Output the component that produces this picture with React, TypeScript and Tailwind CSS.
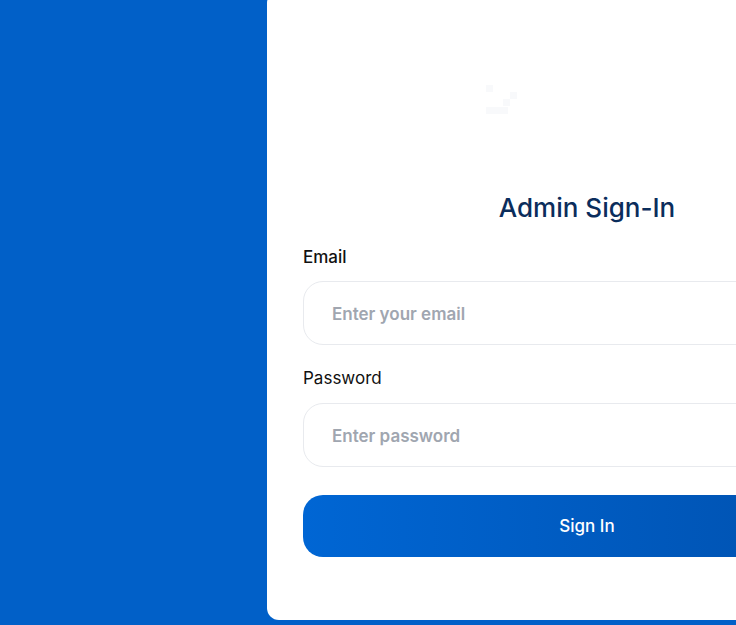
import React from "react";

export default function App() {
  return (
    <div
      className="flex h-[625px] w-[736px] overflow-hidden bg-[#0160c8]"
      style={{ fontFamily: "Inter, 'Noto Sans', sans-serif" }}
    >
      <div className="w-[267px] shrink-0" />
      <div className="-mt-[9px] flex h-[629px] w-[640px] shrink-0 flex-col rounded-xl bg-white px-9">
        <div className="flex h-[201px] items-start justify-center pt-[92px]">
          <svg width="60" height="40" viewBox="0 0 60 40" className="-ml-[160px]">
            <rect x="9" y="2" width="7" height="7" fill="#f8f9fb" />
            <rect x="33" y="9" width="7" height="7" fill="#f8f9fb" />
            <rect x="26" y="16" width="7" height="7" fill="#f8f9fb" />
            <rect x="9" y="24" width="22" height="7" fill="#f8f9fb" />
          </svg>
        </div>
        <h1 className="text-center text-[26px] leading-8 font-medium text-[#0b2d5c]">
          Admin Sign-In
        </h1>
        <label className="mt-[21px] text-[17px] leading-6 font-medium text-[#111111]">Email</label>
        <div className="mt-3 flex h-16 items-center rounded-[20px] border border-[#e8eaee] px-7 pt-[3px]">
          <span className="text-[17px] font-semibold text-[#a0a6b0]">Enter your email</span>
        </div>
        <label className="mt-[21px] text-[17px] leading-6 text-[#111111]">Password</label>
        <div className="mt-[13px] flex h-16 items-center rounded-[20px] border border-[#e8eaee] px-7 pt-[3px]">
          <span className="text-[17px] font-semibold text-[#a0a6b0]">Enter password</span>
        </div>
        <button className="mt-7 flex h-[62px] items-center justify-center rounded-[20px] bg-gradient-to-r from-[#0066d4] to-[#0050ad] pt-[2px] text-[17px] font-medium text-white">
          Sign In
        </button>
      </div>
    </div>
  );
}
